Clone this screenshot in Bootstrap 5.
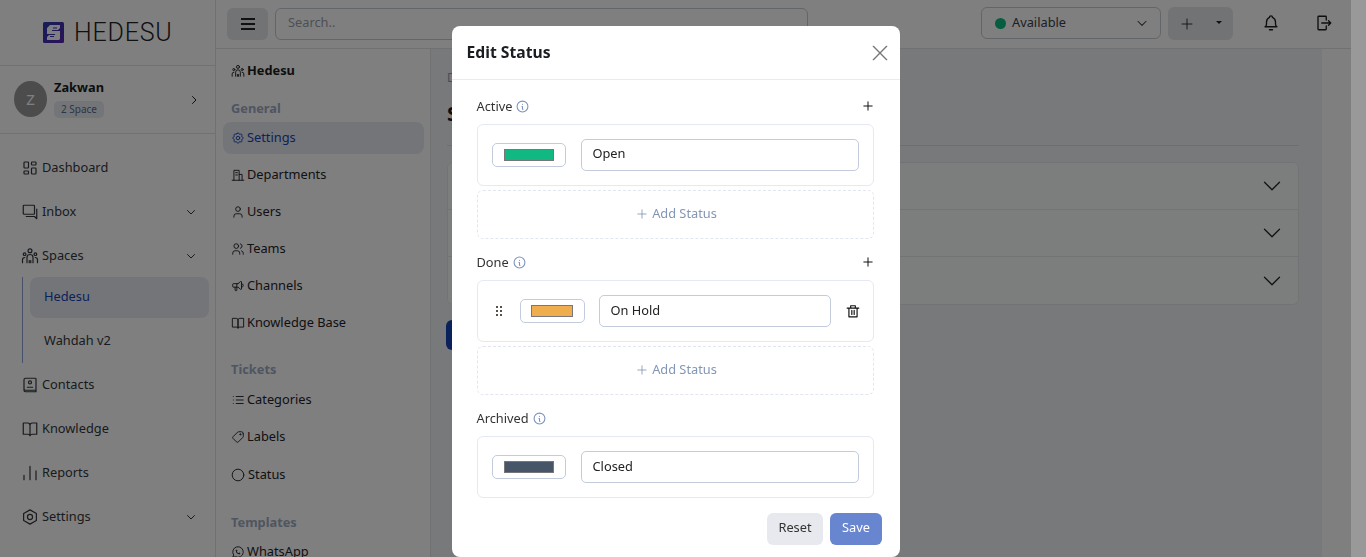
<!DOCTYPE html>
<html lang="en">
<head>
    <meta charset="UTF-8">
    <title>Edit Status</title>
    <link href="https://cdn.jsdelivr.net/npm/bootstrap@5.3.3/dist/css/bootstrap.min.css" rel="stylesheet">
    <style>
        html, body { height: 100%; overflow: hidden; }
        body { font-family: "Noto Sans", sans-serif; font-size: 12.8px; color: #1a1d21; background: #fff; }
        .ico { width: 16px; height: 16px; fill: none; stroke: currentColor; stroke-width: 1.8; stroke-linecap: round; stroke-linejoin: round; flex-shrink: 0; }

        .app-shell { width: 1351px; height: 557px; display: flex; }
        .side-main { width: 216px; flex-shrink: 0; border-right: 1px solid #dee2e6; }
        .logo-row { height: 66px; border-bottom: 1px solid #dee2e6; padding: 22px 0 0 43px; gap: 10px; }
        .logo-text { font-family: Roboto, sans-serif; font-weight: 300; font-size: 25px; line-height: 21px; letter-spacing: .8px; color: #222; }
        .profile-row { height: 68px; border-bottom: 1px solid #dee2e6; padding: 0 15px 0 14px; }
        .avatar-z { width: 33px; height: 36px; margin-top: -1px; border-radius: 50%; background: #999; color: #fff; font-size: 15px; }
        .profile-info { margin: 0 0 3px -1px; }
        .profile-name { font-weight: 700; font-size: 12.8px; line-height: 17px; }
        .space-tag { background: #e8ebf1; color: #5b6b8c; font-size: 10px; line-height: 17px; height: 17px; border-radius: 5px; padding: 0 7px; display: inline-block; margin-top: 5px; vertical-align: top; }
        .main-nav { padding-top: 12px; }
        .main-link { height: 44px; padding: 0 18px 0 21px; gap: 3px; color: #33373d; text-decoration: none; }
        .main-link > .ico:first-child { width: 18px; height: 18px; stroke-width: 1.6; }
        .sub-list { margin: -1px 0 0 22px; border-left: 1px solid #8fa3d6; height: 86px; }
        .sub-link { height: 41px; margin: 0 6px 2px 7px; padding-left: 14px; border-radius: 8px; color: #33373d; text-decoration: none; }
        .sub-link.is-on { background: #e8ebf1; color: #1743b7; padding-bottom: 1px; }
        .chev-sm { width: 12px; height: 12px; margin-left: auto; stroke-width: 2; }

        .content-col { flex: 1; min-width: 0; display: flex; flex-direction: column; }
        .top-strip { height: 49px; flex-shrink: 0; border-bottom: 1px solid #dee2e6; padding: 8px 18px 0 11px; }
        .burger-btn { width: 41px; height: 32px; background: #e4e7eb; border-radius: 6px; border: 0; }
        .search-box { width: 533px; height: 32px; margin-left: 7px; font-size: 12.8px; padding: 0 12px 4px; border-color: #c5cad3; border-radius: 6px; }
        .search-box::placeholder { color: #9aa0a8; }
        .avail-box { width: 180px; height: 32px; margin: -1px 7px 0 173px; border: 1px solid #c5cad3; border-radius: 6px; padding: 0 11px 0 13px; gap: 6px; color: #3a3f47; }
        .avail-dot { width: 11px; height: 11px; border-radius: 50%; background: #10b981; }
        .avail-box .chev-sm { width: 14px; height: 14px; stroke-width: 1.8; }
        .add-group { width: 65px; height: 33px; margin-top: -1px; background: #e4e7eb; border-radius: 6px; }
        .add-group .btn { border: 0; padding: 0 0 1px 1px; color: #222; font-size: 13px; }
        .top-icons { margin-left: 29px; gap: 35px; padding-top: 6px; }
        .top-icons .ico { width: 18px; height: 18px; }

        .lower-row { flex: 1; min-height: 0; display: flex; }
        .side-second { width: 215px; flex-shrink: 0; padding: 12px 6px 0 7px; border-right: 1px solid #dee2e6; overflow: hidden; }
        .second-title { height: 20px; padding-left: 8px; gap: 2px; font-weight: 700; }
        .second-title .ico { width: 14px; height: 14px; stroke-width: 1.6; }
        .second-head { height: 20px; line-height: 20px; margin: 20px 0 5px 8px; font-weight: 700; color: #9eabc2; }
        .second-title + .second-head { margin: 17px 0 4px 8px; }
        .status-link + .second-head { margin: 21px 0 4px 8px; }
        .second-link { height: 32px; margin-bottom: 5px; padding-left: 8px; gap: 2px; border-radius: 8px; color: #1f2329; text-decoration: none; }
        .second-link.is-on { background: #e8ebf1; color: #1743b7; }
        .second-link .ico { width: 14px; height: 14px; stroke-width: 1.6; }
        .status-link { margin-top: 6px; gap: 3px; }

        .page-area { width: 891px; flex-shrink: 0; background: #f1f3f5; padding: 21px 23px 0 16px; overflow: hidden; }
        .crumb-line { font-size: 12px; color: #8d99ae; line-height: 16px; }
        .page-title { font-size: 20px; font-weight: 700; line-height: 28px; margin: 14px 0 17px; }
        .page-rule { border-top: 1px solid #d8dce2; height: 17px; }
        .page-area .accordion-item { background: #f9fafb; --bs-accordion-border-color: #e4e7eb; }
        .page-area .accordion-button { height: 46px; background: #f9fafb; font-size: 12.8px; box-shadow: none; padding: 0 17px 0 16px; }
        .page-area .accordion-item:last-child .accordion-button { height: 47px; }
        .page-area .accordion-button::after { margin-right: -1px; }
        .save-under { margin-top: 15px; height: 30px; width: 70px; background: #1743b7; border: 0; font-size: 13px; margin-left: -1px; }

        .scroll-strip { position: fixed; top: 0; right: 0; width: 15px; height: 100%; background: #999; z-index: 1060; }
        .modal-wide { width: 1351px; overflow: hidden; }
        .edit-dialog { max-width: 448px; width: 448px; margin: 26px auto 0; }
        .edit-dialog .modal-content { border: 0; border-radius: 8px; }
        .edit-dialog .modal-header { height: 54px; padding: 0 12px 0 15px; border-color: #e9ecef; }
        .edit-title { font-size: 15.7px; font-weight: 700; }
        .close-x { background: none; border: 0; padding: 0; color: #777; line-height: 0; }
        .close-x .ico { width: 16px; height: 16px; stroke-width: 2; }
        .edit-dialog .modal-body { padding: 15px 26px 12px 25px; }
        .group-label { height: 24px; margin-bottom: 5px; gap: 4px; color: #333; }
        .group-label .ico { width: 13px; height: 13px; margin-bottom: 2px; color: #7d92bb; stroke-width: 2; }
        .plus-mini { margin-left: auto; margin-right: 1px; width: 10px !important; height: 10px !important; color: #111 !important; stroke-width: 2.4 !important; }
        .status-box { height: 62px; border: 1px solid #e6e9f4; border-radius: 6px; padding: 0 14px; }
        .swatch-btn { width: 74px; height: 24px; border: 1px solid #c3cbdc; border-radius: 5px; flex-shrink: 0; }
        .swatch-btn.narrow { width: 65px; }
        .swatch-fill { width: 50px; height: 12px; border: 1px solid #777; }
        .narrow .swatch-fill { width: 42px; }
        .name-field { height: 32px; font-size: 12.8px; padding: 0 11px 4px; margin-left: 15px; border-color: #c3cbdc; border-radius: 5px; color: #222; }
        .name-field.sits-lower { padding-bottom: 2px; }
        .narrow + .name-field { margin-left: 14px; }
        .drag-dots { width: 6px; height: 10px; margin: 0 18px 0 4px; flex-shrink: 0; color: #55504c; }
        .bin-icon { width: 14px !important; height: 14px !important; margin: 0 -1px 0 15px; color: #111; stroke-width: 2 !important; }
        .add-box { height: 49px; margin-top: 4px; padding: 0 0 2px 4px; border: 1px dashed #e2e6f0; border-radius: 6px; color: #8296b5; gap: 5px; margin-bottom: 12px; }
        .add-box .ico { width: 10px; height: 10px; stroke-width: 2; }
        .foot-row { margin: 15px -8px 0 0; gap: 7px; }
        .foot-row .btn { height: 32px; font-size: 12.8px; padding: 0 0 2px 1px; border: 0; border-radius: 6px; }
        .reset-btn { width: 56px; background: #e7e9ee; color: #333; }
        .save-btn { width: 52px; background: #6885d0; color: #fff; }
    </style>
</head>
<body>

<svg class="d-none">
    <symbol id="i-dash" viewBox="0 0 24 24"><path d="M5 4h4a1 1 0 0 1 1 1v6a1 1 0 0 1-1 1H5a1 1 0 0 1-1-1V5a1 1 0 0 1 1-1M5 16h4a1 1 0 0 1 1 1v2a1 1 0 0 1-1 1H5a1 1 0 0 1-1-1v-2a1 1 0 0 1 1-1M15 12h4a1 1 0 0 1 1 1v6a1 1 0 0 1-1 1h-4a1 1 0 0 1-1-1v-6a1 1 0 0 1 1-1M15 4h4a1 1 0 0 1 1 1v2a1 1 0 0 1-1 1h-4a1 1 0 0 1-1-1V5a1 1 0 0 1 1-1"/></symbol>
    <symbol id="i-inbox" viewBox="0 0 24 24"><path d="M3 4a1 1 0 0 1 1-1h13a1 1 0 0 1 1 1v10a1 1 0 0 1-1 1H4l-1-1zM21 8v13l-3-3H7"/></symbol>
    <symbol id="i-spaces" viewBox="0 0 24 24"><circle cx="12" cy="5" r="2.6"/><path d="M8 21v-7a4 4 0 0 1 8 0v7"/><circle cx="4.8" cy="9.5" r="1.8"/><circle cx="19.2" cy="9.5" r="1.8"/><path d="M2 21v-4a3 3 0 0 1 3-3M22 21v-4a3 3 0 0 0-3-3M11 21v-3M13 21v-3"/></symbol>
    <symbol id="i-contact" viewBox="0 0 24 24"><path d="M6 3h13a1 1 0 0 1 1 1v15H6a2 2 0 0 1-2-2V5a2 2 0 0 1 2-2zM4 17v2a2 2 0 0 0 2 2h14v-2"/><circle cx="12" cy="8.5" r="2"/><path d="M8.5 15h7"/></symbol>
    <symbol id="i-book" viewBox="0 0 24 24"><path d="M3 4h6a3 3 0 0 1 3 3v14a3 3 0 0 0-3-2H3zM21 4h-6a3 3 0 0 0-3 3v14a3 3 0 0 1 3-2h6z"/></symbol>
    <symbol id="i-bars" viewBox="0 0 24 24"><path d="M4 21v-6M12 21V3M20 21V9"/></symbol>
    <symbol id="i-hex" viewBox="0 0 24 24"><path d="M12 2.5l8.5 4.75v9.5L12 21.5l-8.5-4.75v-9.5z"/><circle cx="12" cy="12" r="3.4"/></symbol>
    <symbol id="i-chev-d" viewBox="0 0 24 24"><path d="M5 9l7 7 7-7"/></symbol>
    <symbol id="i-chev-r" viewBox="0 0 24 24"><path d="M9 5l7 7-7 7"/></symbol>
    <symbol id="i-gear" viewBox="0 0 24 24"><path d="M10.325 4.317c.426-1.756 2.924-1.756 3.35 0a1.724 1.724 0 0 0 2.573 1.066c1.543-.94 3.31.826 2.37 2.37a1.724 1.724 0 0 0 1.065 2.572c1.756.426 1.756 2.924 0 3.35a1.724 1.724 0 0 0-1.066 2.573c.94 1.543-.826 3.31-2.37 2.37a1.724 1.724 0 0 0-2.572 1.065c-.426 1.756-2.924 1.756-3.35 0a1.724 1.724 0 0 0-2.573-1.066c-1.543.94-3.31-.826-2.37-2.37a1.724 1.724 0 0 0-1.065-2.572c-1.756-.426-1.756-2.924 0-3.35a1.724 1.724 0 0 0 1.066-2.573c-.94-1.543.826-3.31 2.37-2.37 1 .608 2.296.07 2.572-1.065z"/><circle cx="12" cy="12" r="3"/></symbol>
    <symbol id="i-dept" viewBox="0 0 24 24"><path d="M2 21h20M5 21V4h9v17M14 11h5v10M8 8h3M8 12h3"/></symbol>
    <symbol id="i-user" viewBox="0 0 24 24"><circle cx="12" cy="7" r="4"/><path d="M5 21v-2a4 4 0 0 1 4-4h6a4 4 0 0 1 4 4v2"/></symbol>
    <symbol id="i-team" viewBox="0 0 24 24"><circle cx="9" cy="7" r="4"/><path d="M3 21v-2a4 4 0 0 1 4-4h4a4 4 0 0 1 4 4v2M16 3.13a4 4 0 0 1 0 7.75M21 21v-2a4 4 0 0 0-3-3.85"/></symbol>
    <symbol id="i-mega" viewBox="0 0 24 24"><path d="M18 8a3 3 0 0 1 0 6M10 8v11a1 1 0 0 1-1 1H8a1 1 0 0 1-1-1v-5M12 8l4.524-3.77A.9.9 0 0 1 18 4.922v12.156a.9.9 0 0 1-1.476.692L12 14H4a1 1 0 0 1-1-1V9a1 1 0 0 1 1-1h8"/></symbol>
    <symbol id="i-list" viewBox="0 0 24 24"><path d="M9 6h12M9 12h12M9 18h12M4 6v.01M4 12v.01M4 18v.01"/></symbol>
    <symbol id="i-tag" viewBox="0 0 24 24"><g transform="matrix(-1 0 0 1 24 0)"><path d="M3 6v5.172a2 2 0 0 0 .586 1.414l7.71 7.71a2.41 2.41 0 0 0 3.408 0l5.592-5.592a2.41 2.41 0 0 0 0-3.408l-7.71-7.71A2 2 0 0 0 11.172 3H6a3 3 0 0 0-3 3"/><circle cx="7.5" cy="7.5" r="1"/></g></symbol>
    <symbol id="i-circle" viewBox="0 0 24 24"><circle cx="12" cy="12" r="10"/></symbol>
    <symbol id="i-wa" viewBox="0 0 24 24"><path d="M3 21l1.65-3.8a9 9 0 1 1 3.4 2.9L3 21"/><path d="M9 10a.5.5 0 0 0 1 0V9a.5.5 0 0 0-1 0v1a5 5 0 0 0 5 5h1a.5.5 0 0 0 0-1h-1a.5.5 0 0 0 0 1"/></symbol>
    <symbol id="i-info" viewBox="0 0 24 24"><circle cx="12" cy="12" r="10"/><path d="M12 8h.01M11 12h1v5h1"/></symbol>
    <symbol id="i-plus" viewBox="0 0 24 24"><path d="M12 2v20M2 12h20"/></symbol>
    <symbol id="i-x" viewBox="0 0 24 24"><path d="M2 2l20 20M22 2L2 22"/></symbol>
    <symbol id="i-trash" viewBox="0 0 24 24"><path d="M2 7h20M5 7v15h14V7M8 7V3h8v4M10 11v7M14 11v7"/></symbol>
    <symbol id="i-bell" viewBox="0 0 24 24"><path d="M10 4.5a2 2 0 1 1 4 0a7 7 0 0 1 4 6v3a4 4 0 0 0 2 3.5H4a4 4 0 0 0 2-3.5v-3a7 7 0 0 1 4-6M10 21h4"/></symbol>
    <symbol id="i-out" viewBox="0 0 24 24"><path d="M15 8V4a1 1 0 0 0-1-1H5a1 1 0 0 0-1 1v16a1 1 0 0 0 1 1h9a1 1 0 0 0 1-1v-4M9 12h12M18 9l3 3-3 3"/></symbol>
</svg>

<div class="app-shell">
    <aside class="side-main">
        <div class="logo-row d-flex align-items-start">
            <svg width="21" height="21" viewBox="0 0 21 21">
                <defs><linearGradient id="logoFill" x1="0" y1="0" x2="1" y2="1"><stop offset="0" stop-color="#2b3fb0"/><stop offset="1" stop-color="#5a22b5"/></linearGradient></defs>
                <rect width="21" height="21" rx="1.5" fill="url(#logoFill)"/>
                <path d="M7 3h10v3l-2 2H9v1h8v8l-1 1H4v-3l2-2h6v-1H4V6z" fill="#fff"/>
                <path d="M10 5.5h4v1h-4zM7 14h4v1H7z" fill="#3a35b3"/>
            </svg>
            <span class="logo-text">HEDESU</span>
        </div>
        <div class="profile-row d-flex align-items-center gap-2">
            <div class="avatar-z d-flex align-items-center justify-content-center flex-shrink-0">Z</div>
            <div class="profile-info">
                <div class="profile-name">Zakwan</div>
                <span class="space-tag">2 Space</span>
            </div>
            <svg class="ico chev-sm"><use href="#i-chev-r"/></svg>
        </div>
        <nav class="main-nav">
            <a class="main-link d-flex align-items-center" href="#"><svg class="ico"><use href="#i-dash"/></svg>Dashboard</a>
            <a class="main-link d-flex align-items-center" href="#"><svg class="ico"><use href="#i-inbox"/></svg>Inbox<svg class="ico chev-sm"><use href="#i-chev-d"/></svg></a>
            <a class="main-link d-flex align-items-center" href="#"><svg class="ico"><use href="#i-spaces"/></svg>Spaces<svg class="ico chev-sm"><use href="#i-chev-d"/></svg></a>
            <div class="sub-list">
                <a class="sub-link is-on d-flex align-items-center" href="#">Hedesu</a>
                <a class="sub-link d-flex align-items-center" href="#">Wahdah v2</a>
            </div>
            <a class="main-link d-flex align-items-center" href="#"><svg class="ico"><use href="#i-contact"/></svg>Contacts</a>
            <a class="main-link d-flex align-items-center" href="#"><svg class="ico"><use href="#i-book"/></svg>Knowledge</a>
            <a class="main-link d-flex align-items-center" href="#"><svg class="ico"><use href="#i-bars"/></svg>Reports</a>
            <a class="main-link d-flex align-items-center" href="#"><svg class="ico"><use href="#i-hex"/></svg>Settings<svg class="ico chev-sm"><use href="#i-chev-d"/></svg></a>
        </nav>
    </aside>

    <div class="content-col">
        <header class="top-strip d-flex align-items-start">
            <button class="burger-btn d-flex align-items-center justify-content-center" type="button">
                <svg width="14" height="12" viewBox="0 0 14 12"><path d="M0 1h14M0 6h14M0 11h14" stroke="#222" stroke-width="1.8"/></svg>
            </button>
            <input class="form-control search-box" type="text" placeholder="Search..">
            <div class="avail-box d-flex align-items-center">
                <span class="avail-dot"></span>
                <span>Available</span>
                <svg class="ico chev-sm"><use href="#i-chev-d"/></svg>
            </div>
            <div class="add-group btn-group">
                <button class="btn" type="button"><svg class="ico" style="width:12px;height:12px"><use href="#i-plus"/></svg></button>
                <button class="btn dropdown-toggle dropdown-toggle-split" type="button"></button>
            </div>
            <div class="top-icons d-flex align-items-center">
                <svg class="ico"><use href="#i-bell"/></svg>
                <svg class="ico"><use href="#i-out"/></svg>
            </div>
        </header>

        <div class="lower-row">
            <aside class="side-second">
                <div class="second-title d-flex align-items-center"><svg class="ico"><use href="#i-spaces"/></svg>Hedesu</div>
                <div class="second-head">General</div>
                <a class="second-link is-on d-flex align-items-center" href="#"><svg class="ico"><use href="#i-gear"/></svg>Settings</a>
                <a class="second-link d-flex align-items-center" href="#"><svg class="ico"><use href="#i-dept"/></svg>Departments</a>
                <a class="second-link d-flex align-items-center" href="#"><svg class="ico"><use href="#i-user"/></svg>Users</a>
                <a class="second-link d-flex align-items-center" href="#"><svg class="ico"><use href="#i-team"/></svg>Teams</a>
                <a class="second-link d-flex align-items-center" href="#"><svg class="ico"><use href="#i-mega"/></svg>Channels</a>
                <a class="second-link d-flex align-items-center" href="#"><svg class="ico"><use href="#i-book"/></svg>Knowledge Base</a>
                <div class="second-head">Tickets</div>
                <a class="second-link d-flex align-items-center" href="#"><svg class="ico"><use href="#i-list"/></svg>Categories</a>
                <a class="second-link d-flex align-items-center" href="#"><svg class="ico"><use href="#i-tag"/></svg>Labels</a>
                <a class="second-link status-link d-flex align-items-center" href="#"><svg class="ico"><use href="#i-circle"/></svg>Status</a>
                <div class="second-head">Templates</div>
                <a class="second-link d-flex align-items-center" href="#"><svg class="ico"><use href="#i-wa"/></svg>WhatsApp</a>
            </aside>

            <main class="page-area">
                <div class="crumb-line">Dashboard / Settings / Status</div>
                <h1 class="page-title">Status</h1>
                <div class="page-rule"></div>
                <div class="accordion">
                    <div class="accordion-item"><button class="accordion-button collapsed" type="button">Active</button></div>
                    <div class="accordion-item"><button class="accordion-button collapsed" type="button">Done</button></div>
                    <div class="accordion-item"><button class="accordion-button collapsed" type="button">Archived</button></div>
                </div>
                <button class="btn btn-primary save-under" type="button">Save</button>
            </main>
        </div>
    </div>
</div>

<div class="modal-backdrop show"></div>
<div class="scroll-strip"></div>

<div class="modal modal-wide d-block" tabindex="-1">
    <div class="modal-dialog edit-dialog">
        <div class="modal-content">
            <div class="modal-header d-flex justify-content-between">
                <h5 class="edit-title mb-0">Edit Status</h5>
                <button class="close-x" type="button" aria-label="Close"><svg class="ico"><use href="#i-x"/></svg></button>
            </div>
            <div class="modal-body">
                <div class="group-label d-flex align-items-center">Active <svg class="ico"><use href="#i-info"/></svg><svg class="ico plus-mini"><use href="#i-plus"/></svg></div>
                <div class="status-box d-flex align-items-center">
                    <div class="swatch-btn d-flex align-items-center justify-content-center"><div class="swatch-fill" style="background:#10b981"></div></div>
                    <input class="form-control name-field" type="text" value="Open">
                </div>
                <div class="add-box d-flex align-items-center justify-content-center"><svg class="ico"><use href="#i-plus"/></svg>Add Status</div>

                <div class="group-label d-flex align-items-center">Done <svg class="ico"><use href="#i-info"/></svg><svg class="ico plus-mini"><use href="#i-plus"/></svg></div>
                <div class="status-box d-flex align-items-center">
                    <svg class="drag-dots" viewBox="0 0 6 10"><g fill="currentColor"><rect width="2" height="2"/><rect x="4" width="2" height="2"/><rect y="4" width="2" height="2"/><rect x="4" y="4" width="2" height="2"/><rect y="8" width="2" height="2"/><rect x="4" y="8" width="2" height="2"/></g></svg>
                    <div class="swatch-btn narrow d-flex align-items-center justify-content-center"><div class="swatch-fill" style="background:#f0ad4e"></div></div>
                    <input class="form-control name-field sits-lower" type="text" value="On Hold">
                    <svg class="ico bin-icon"><use href="#i-trash"/></svg>
                </div>
                <div class="add-box d-flex align-items-center justify-content-center"><svg class="ico"><use href="#i-plus"/></svg>Add Status</div>

                <div class="group-label d-flex align-items-center">Archived <svg class="ico"><use href="#i-info"/></svg></div>
                <div class="status-box d-flex align-items-center">
                    <div class="swatch-btn d-flex align-items-center justify-content-center"><div class="swatch-fill" style="background:#475569"></div></div>
                    <input class="form-control name-field sits-lower" type="text" value="Closed">
                </div>

                <div class="foot-row d-flex justify-content-end">
                    <button class="btn reset-btn" type="button">Reset</button>
                    <button class="btn save-btn" type="button">Save</button>
                </div>
            </div>
        </div>
    </div>
</div>

<script src="https://cdn.jsdelivr.net/npm/bootstrap@5.3.3/dist/js/bootstrap.bundle.min.js"></script>
</body>
</html>
